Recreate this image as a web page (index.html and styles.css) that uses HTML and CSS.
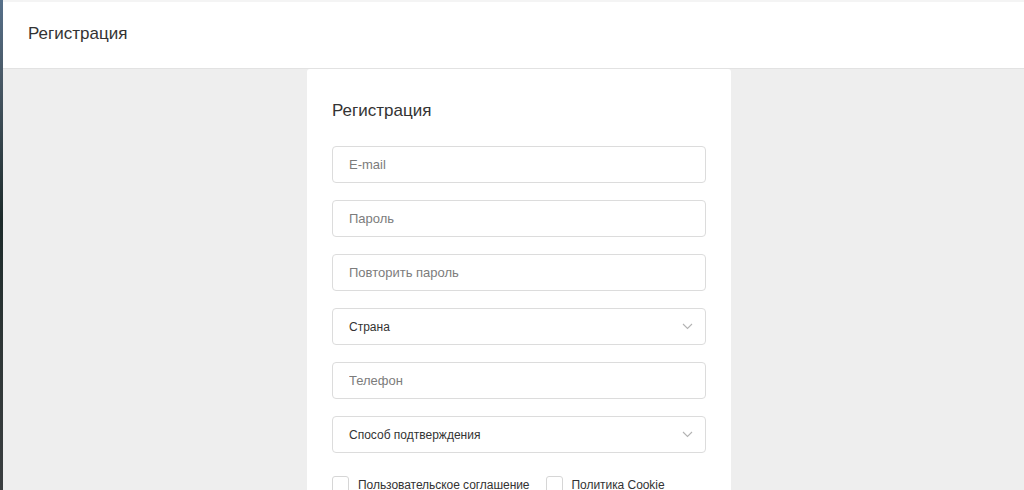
FILE: index.html
```html
<!DOCTYPE html>
<html lang="ru">
<head>
<meta charset="utf-8">
<title>Регистрация</title>
<link rel="stylesheet" href="styles.css">
</head>
<body>
<div class="screen">
  <div class="edge"></div>
  <div class="app">
    <div class="topline"></div>
    <header class="header"><h1 class="header-title">Регистрация</h1></header>
    <main class="content">
      <section class="card">
        <h2 class="card-title">Регистрация</h2>
        <form class="form">
          <input class="field" type="text" placeholder="E-mail">
          <input class="field" type="password" placeholder="Пароль">
          <input class="field" type="password" placeholder="Повторить пароль">
          <div class="field select"><span>Страна</span>
            <svg class="chev" width="11" height="7" viewBox="0 0 11 7"><path d="M1 1l4.5 4.5L10 1" fill="none" stroke="#b3b3b3" stroke-width="1.1"/></svg>
          </div>
          <input class="field" type="text" placeholder="Телефон">
          <div class="field select"><span>Способ подтверждения</span>
            <svg class="chev" width="11" height="7" viewBox="0 0 11 7"><path d="M1 1l4.5 4.5L10 1" fill="none" stroke="#b3b3b3" stroke-width="1.1"/></svg>
          </div>
          <div class="checks">
            <label class="check"><span class="box"></span>Пользовательское соглашение</label>
            <label class="check"><span class="box"></span>Политика Cookie</label>
          </div>
        </form>
      </section>
    </main>
  </div>
</div>
</body>
</html>
```
FILE: styles.css
```css
* { box-sizing: border-box; }
html, body { margin: 0; padding: 0; height: 100%; overflow: hidden; }
body { font-family: "Liberation Sans", Arial, sans-serif; background: #eeeeee; }
.screen { display: flex; height: 490px; }
.edge {
  width: 3px; flex: none;
  background: linear-gradient(to bottom, #56708a 0%, #4a5a68 15%, #1c2a2a 45%, #2e3636 70%, #3a3e40 100%);
}
.app { flex: 1; display: flex; flex-direction: column; background: #eeeeee; min-height: 0; }
.topline { height: 2px; flex: none; background: #f4f4f4; }
.header {
  height: 67px; flex: none; background: #ffffff; border-bottom: 1px solid #e2e2e2;
  display: flex; align-items: center; padding-left: 25px; padding-bottom: 2px;
}
.header-title { margin: 0; font-size: 17px; font-weight: normal; color: #333333; }
.content { flex: 1; min-height: 0; padding-left: 304px; }
.card {
  width: 424px; height: 100%; background: #ffffff; border-radius: 3px 3px 0 0;
  padding: 31px 25px 0 25px;
}
.card-title { margin: 0 0 24px 0; font-size: 17px; font-weight: normal; color: #333333; line-height: 22px; }
.form { display: flex; flex-direction: column; gap: 17px; }
.field {
  width: 374px; height: 37px; flex: none; border: 1px solid #dcdcdc; border-radius: 4px;
  padding: 0 16px; font-family: "Liberation Sans", Arial, sans-serif; font-size: 13px;
  color: #333; background: #fff; outline: none; margin: 0;
}
.field::placeholder { color: #7c7c7c; }
.select { display: flex; align-items: center; justify-content: space-between; font-size: 12px; color: #333333; padding-right: 12px; }
.chev { display: block; }
.checks { display: flex; gap: 16px; margin-top: 6px; }
.check { display: flex; align-items: center; gap: 9px; font-size: 12px; color: #333333; letter-spacing: -0.05px; }
.box { width: 17px; height: 17px; border: 1px solid #d6d6d6; border-radius: 3px; background: #fff; display: inline-block; }
```
